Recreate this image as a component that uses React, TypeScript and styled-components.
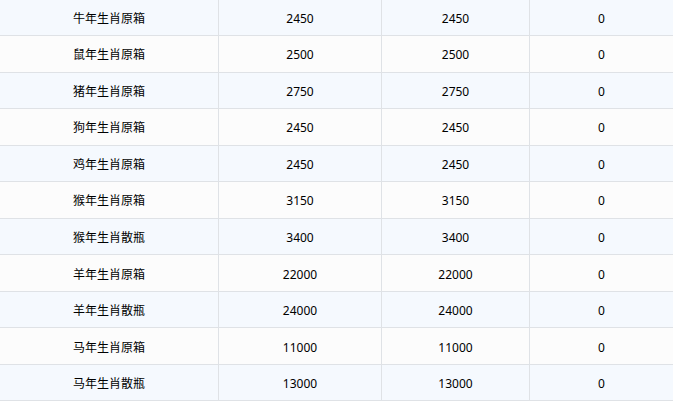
import styled, { createGlobalStyle } from 'styled-components';

const GlobalStyle = createGlobalStyle`
  html, body {
    margin: 0;
    padding: 0;
    background: #fcfcfc;
    overflow: hidden;
  }
`;

interface StockRow {
  name: string;
  total: number;
  stock: number;
  sold: number;
}

const rows: StockRow[] = [
  { name: '牛年生肖原箱', total: 2450, stock: 2450, sold: 0 },
  { name: '鼠年生肖原箱', total: 2500, stock: 2500, sold: 0 },
  { name: '猪年生肖原箱', total: 2750, stock: 2750, sold: 0 },
  { name: '狗年生肖原箱', total: 2450, stock: 2450, sold: 0 },
  { name: '鸡年生肖原箱', total: 2450, stock: 2450, sold: 0 },
  { name: '猴年生肖原箱', total: 3150, stock: 3150, sold: 0 },
  { name: '猴年生肖散瓶', total: 3400, stock: 3400, sold: 0 },
  { name: '羊年生肖原箱', total: 22000, stock: 22000, sold: 0 },
  { name: '羊年生肖散瓶', total: 24000, stock: 24000, sold: 0 },
  { name: '马年生肖原箱', total: 11000, stock: 11000, sold: 0 },
  { name: '马年生肖散瓶', total: 13000, stock: 13000, sold: 0 },
];

const Wrapper = styled.div`
  width: 673px;
  height: 401px;
  overflow: hidden;
`;

const Table = styled.div`
  display: flex;
  flex-direction: column;
  margin-top: -0.6px;
  font-family: 'Noto Sans', 'Noto Sans CJK SC', sans-serif;
  font-size: 12px;
  color: #000;
`;

const Row = styled.div<{ striped: boolean }>`
  display: grid;
  grid-template-columns: 219px 163px 148px 1fr;
  height: 36.56px;
  box-sizing: border-box;
  border-bottom: 1px solid #dfe2e6;
  background-color: ${({ striped }) => (striped ? '#f5f9fe' : '#fcfcfc')};
`;

const Cell = styled.div`
  display: flex;
  align-items: center;
  justify-content: center;
  box-sizing: border-box;
  padding-top: 3px;
  border-right: 1px solid #dfe2e6;
  line-height: 1;

  &:last-child {
    border-right: none;
  }
`;

export default function App() {
  return (
    <Wrapper>
      <GlobalStyle />
      <Table>
        {rows.map((row, i) => (
          <Row key={row.name} striped={i % 2 === 0}>
            <Cell>{row.name}</Cell>
            <Cell>{row.total}</Cell>
            <Cell>{row.stock}</Cell>
            <Cell>{row.sold}</Cell>
          </Row>
        ))}
      </Table>
    </Wrapper>
  );
}
